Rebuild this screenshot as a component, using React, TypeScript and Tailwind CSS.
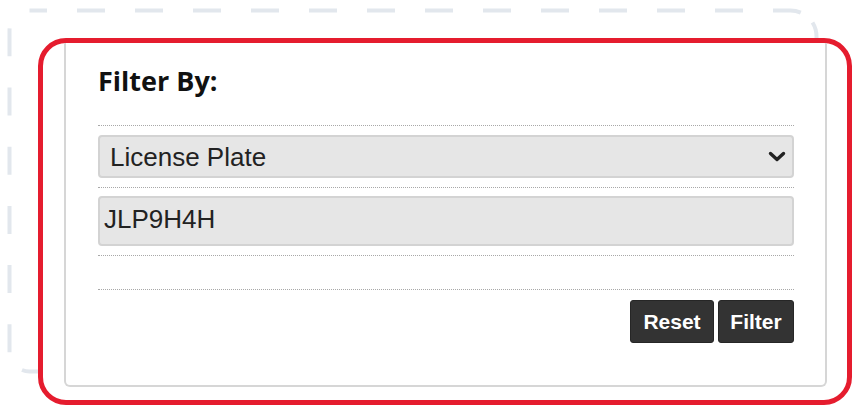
export default function App() {
  return (
    <div className="relative w-[861px] h-[412px] bg-white overflow-hidden font-['Liberation_Sans',Arial,sans-serif]">
      <svg className="absolute left-0 top-0" width="861" height="412" viewBox="0 0 861 412">
        <path
          d="M 29.5 10.5 L 790.5 10.5 A 26 26 0 0 1 816.5 36.5"
          fill="none"
          stroke="#e2e7ed"
          strokeWidth="4"
          strokeDasharray="28 30"
          strokeDashoffset="10.5"
        />
        <path
          d="M 812.5 22.5 A 26 26 0 0 1 816.5 36.5 L 816.5 44"
          fill="none"
          stroke="#e2e7ed"
          strokeWidth="4"
        />
        <path
          d="M 29.5 10.5 A 20 20 0 0 0 9.5 30.5 L 9.5 351.5 A 20 20 0 0 0 29.5 371.5"
          fill="none"
          stroke="#e2e7ed"
          strokeWidth="4"
          strokeDasharray="28 31.2"
          strokeDashoffset="30.2"
        />
        <path
          d="M 22 370 A 20 20 0 0 0 29.5 371.5 L 42 371.5"
          fill="none"
          stroke="#e2e7ed"
          strokeWidth="4"
        />
      </svg>
      <div className="relative pl-[38px] pt-[38px]">
        <div className="w-[814px] h-[367px] border-[5px] border-[#e51c2e] rounded-[28px] bg-white overflow-hidden pl-[21px] pr-[20px]">
          <div className="h-[344px] border-x-2 border-b-2 border-[#d6d6d6] rounded-b-[6px] pl-[32px] pr-[31px] pt-[20px] flex flex-col">
            <h2 className="font-['Open_Sans',sans-serif] font-bold text-[27px] leading-[36px] text-[#111111]">
              Filter By:
            </h2>
            <div className="mt-[26px] h-0 border-t border-dotted border-[#a8a8a8]" />
            <div className="mt-[9px] h-[43px] bg-[#e6e6e6] border-2 border-[#d3d3d3] rounded-[4px] flex items-center justify-between pl-[10px] pr-[6px]">
              <span className="text-[26px] leading-none text-[#222222]">License Plate</span>
              <svg width="18" height="12" viewBox="0 0 18 12">
                <polyline points="2.5,2.5 9,8.5 15.5,2.5" fill="none" stroke="#222222" strokeWidth="3.4" strokeLinecap="round" strokeLinejoin="round" />
              </svg>
            </div>
            <div className="mt-[9px] h-0 border-t border-dotted border-[#a8a8a8]" />
            <div className="mt-[8px] h-[50px] bg-[#e6e6e6] border-2 border-[#d3d3d3] rounded-[4px] flex items-center pl-[4px] pb-[5px]">
              <span className="text-[26px] leading-none text-[#222222]">JLP9H4H</span>
            </div>
            <div className="mt-[9px] h-0 border-t border-dotted border-[#a8a8a8]" />
            <div className="mt-[33px] h-0 border-t border-dotted border-[#a8a8a8]" />
            <div className="mt-[10px] flex justify-end gap-[4px]">
              <button className="w-[84px] h-[43px] bg-[#333333] border border-[#262626] rounded-[3px] text-white font-bold text-[21px] leading-none flex items-center justify-center">
                Reset
              </button>
              <button className="w-[76px] h-[43px] bg-[#333333] border border-[#262626] rounded-[3px] text-white font-bold text-[21px] leading-none flex items-center justify-center">
                Filter
              </button>
            </div>
          </div>
        </div>
      </div>
    </div>
  );
}
